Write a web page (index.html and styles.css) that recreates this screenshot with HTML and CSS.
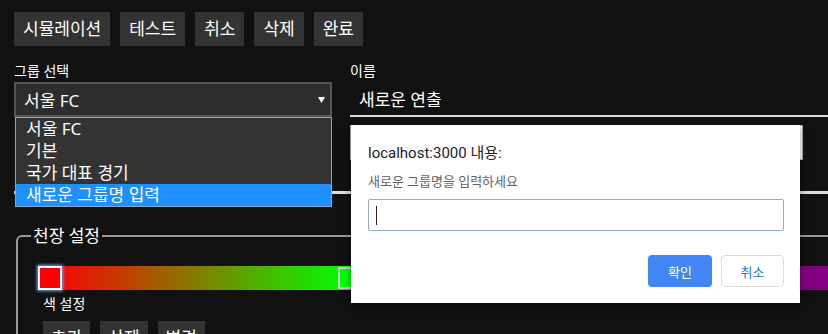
FILE: index.html
```html
<!DOCTYPE html>
<html lang="ko">
<head>
  <meta charset="UTF-8">
  <meta name="viewport" content="width=device-width, initial-scale=1.0">
  <title>연출 편집</title>
  <link rel="stylesheet" href="styles.css">
</head>
<body>
  <div class="page">
    <!-- Top toolbar -->
    <div class="toolbar">
      <button class="btn">시뮬레이션</button>
      <button class="btn">테스트</button>
      <button class="btn">취소</button>
      <button class="btn">삭제</button>
      <button class="btn">완료</button>
    </div>

    <div class="form-row">
      <div class="field group">
        <label class="field-label">그룹 선택</label>
        <div class="select-wrap">
          <div class="select">
            <span>서울 FC</span>
            <svg class="caret" width="7" height="6" viewBox="0 0 7 6"><polygon points="0,0 7,0 3.5,6" fill="#fff"/></svg>
          </div>
          <ul class="options">
            <li>서울 FC</li>
            <li>기본</li>
            <li>국가 대표 경기</li>
            <li class="selected">새로운 그룹명 입력</li>
          </ul>
        </div>
      </div>
      <div class="field name">
        <label class="field-label">이름</label>
        <input class="name-input" type="text" value="새로운 연출">
        <div class="desc-box"></div>
      </div>
    </div>

    <div class="memo"></div>

    <!-- Ceiling settings -->
    <fieldset class="ceiling">
      <legend>천장 설정</legend>
      <div class="slider">
        <div class="track"></div>
        <span class="stop active" style="left: 0px; background: #f00;"></span>
        <span class="stop" style="left: 300px; background: #0f0;"></span>
        <span class="stop" style="left: 729px; background: #800080;"></span>
      </div>
      <div class="color-label">색 설정</div>
      <div class="actions">
        <button class="btn">추가</button>
        <button class="btn">삭제</button>
        <button class="btn">변경</button>
      </div>
    </fieldset>
  </div>

  <!-- Prompt dialog -->
  <div class="prompt">
    <p class="prompt-title">localhost:3000 내용:</p>
    <p class="prompt-msg">새로운 그룹명을 입력하세요</p>
    <div class="prompt-input"><span class="text-caret"></span></div>
    <div class="prompt-buttons">
      <button class="prompt-ok">확인</button>
      <button class="prompt-cancel">취소</button>
    </div>
  </div>
</body>
</html>
```

FILE: styles.css
```css
/* General Styles */
* {
  margin: 0;
  padding: 0;
  box-sizing: border-box;
}

body {
  font-family: "Noto Sans", "Noto Sans CJK KR", sans-serif;
  background-color: #111;
  color: #fff;
  overflow: hidden;
}

.page {
  width: 900px;
  padding: 12px 0 0 14px;
}

/* Buttons */
.btn {
  background-color: #333;
  color: #fff;
  border: none;
  font-family: inherit;
  font-size: 17px;
  height: 34px;
  line-height: 34px;
  padding: 0 9px;
}

.toolbar {
  display: flex;
  gap: 10px;
}

/* Form row */
.form-row {
  display: flex;
  gap: 18px;
  margin-top: 16px;
}

.field-label {
  display: block;
  font-size: 14px;
  line-height: 18px;
  margin-bottom: 2px;
}

.group {
  width: 318px;
}

.select-wrap {
  position: relative;
}

.select {
  height: 35px;
  border: 2px solid #555;
  background-color: #2d2d2d;
  display: flex;
  align-items: center;
  justify-content: space-between;
  padding: 0 5px 0 8px;
  font-size: 17px;
}

.options {
  position: absolute;
  top: 100%;
  left: 1px;
  right: 0;
  list-style: none;
  background-color: #333;
  border: 1px solid #8aa4c8;
}

.options li {
  height: 22px;
  line-height: 22px;
  padding-left: 10px;
  font-size: 17px;
}

.options li.selected {
  background-color: #1e90ff;
}

.name {
  flex: 1;
}

.name-input {
  display: block;
  width: 100%;
  height: 35px;
  background: transparent;
  border: none;
  border-bottom: 2px solid #ddd;
  color: #fff;
  font-family: inherit;
  font-size: 17px;
  padding: 0 9px;
  outline: none;
}

.desc-box {
  width: 453px;
  height: 35px;
  margin-top: 8px;
  background-color: #fff;
  border: 1px solid #aaa;
}

.memo {
  height: 34px;
  border-bottom: 3px solid #ddd;
}

/* Ceiling settings */
.ceiling {
  margin: 32px 0 0 2px;
  border: 2px solid #999;
  border-radius: 6px;
  padding: 20px 0 30px 13px;
}

.ceiling legend {
  padding: 0 2px;
  font-size: 17px;
  line-height: 20px;
}

.slider {
  position: relative;
  width: 820px;
  height: 24px;
  margin-left: 7px;
}

.track {
  height: 100%;
  background: linear-gradient(to right, #f00 12px, #0f0 311px, #800080 740px);
}

.stop {
  position: absolute;
  top: 1px;
  width: 22px;
  height: 22px;
  border: 2px solid #ccc;
}

.stop.active {
  top: 0;
  width: 24px;
  height: 24px;
  border-color: #fff;
  box-shadow: 0 0 3px 1px #6af;
}

.color-label {
  font-size: 14px;
  line-height: 18px;
  margin: 5px 0 0 12px;
}

.actions {
  display: flex;
  gap: 10px;
  margin: 8px 0 0 12px;
}

.actions .btn {
  padding: 0 8px;
}

/* Prompt dialog */
.prompt {
  position: absolute;
  left: 351px;
  top: 125px;
  width: 449px;
  height: 178px;
  background-color: #fff;
  color: #202124;
  padding: 18px 16px 16px 17px;
  box-shadow: 0 2px 8px rgba(0, 0, 0, 0.4);
  font-family: Roboto, "Noto Sans CJK KR", sans-serif;
}

.prompt-title {
  font-size: 15px;
  line-height: 20px;
  margin-bottom: 10px;
}

.prompt-msg {
  font-size: 13px;
  line-height: 18px;
  color: #5f6368;
  margin-bottom: 8px;
}

.prompt-input {
  height: 32px;
  border: 1px solid #8fa9dc;
  border-radius: 2px;
  display: flex;
  align-items: center;
  padding-left: 7px;
}

.text-caret {
  width: 1px;
  height: 19px;
  background-color: #222;
}

.prompt-buttons {
  display: flex;
  justify-content: flex-end;
  gap: 9px;
  margin-top: 24px;
}

.prompt-ok,
.prompt-cancel {
  height: 32px;
  border-radius: 4px;
  font-family: inherit;
  font-size: 13px;
}

.prompt-ok {
  width: 64px;
  background-color: #4285f4;
  color: #fff;
  border: none;
}

.prompt-cancel {
  width: 63px;
  background-color: #fff;
  color: #1a73e8;
  border: 1px solid #dadce0;
}
```
